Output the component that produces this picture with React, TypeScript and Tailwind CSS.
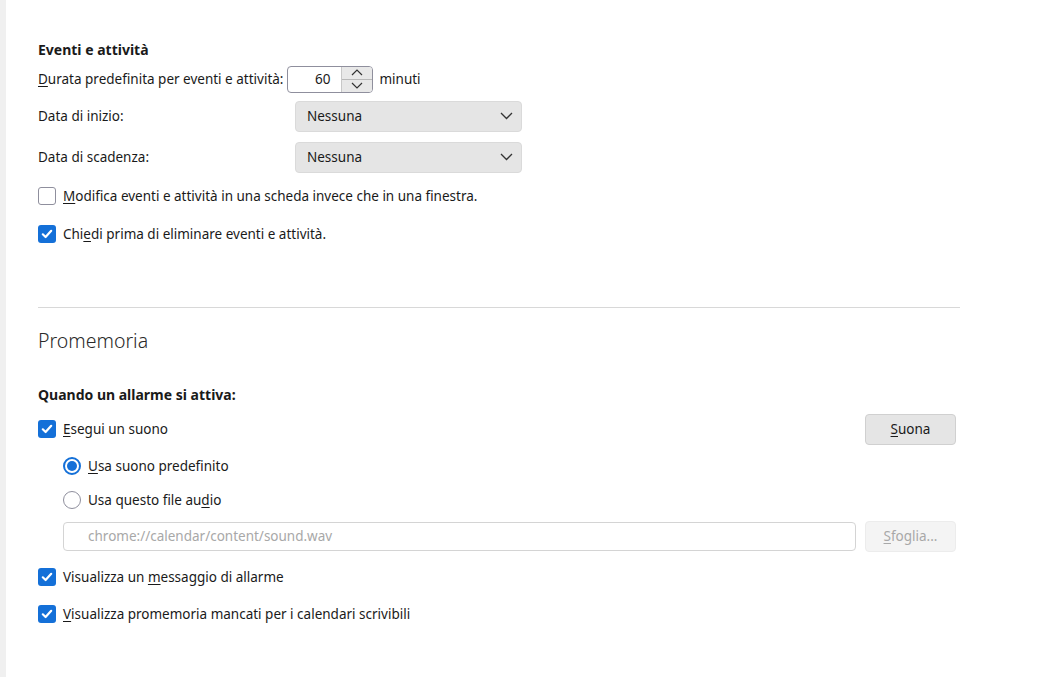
import React from "react";

const font = { fontFamily: '"Noto Sans", "Open Sans", sans-serif' };

function U({ children }: { children: React.ReactNode }) {
  return <span className="underline underline-offset-[2px] decoration-[1px]">{children}</span>;
}

function Check({ checked }: { checked: boolean }) {
  if (checked) {
    return (
      <span className="w-[18px] h-[18px] rounded-[3px] bg-[#1470d8] flex items-center justify-center shrink-0">
        <svg width="12" height="12" viewBox="0 0 12 12">
          <path d="M1.8 6.3 L4.6 9 L10.2 2.8" fill="none" stroke="white" strokeWidth="2.2" strokeLinecap="round" strokeLinejoin="round" />
        </svg>
      </span>
    );
  }
  return <span className="w-[18px] h-[18px] rounded-[3px] border border-[#8f8f9d] bg-white shrink-0" />;
}

function Radio({ checked }: { checked: boolean }) {
  if (checked) {
    return (
      <span className="w-[18px] h-[18px] rounded-full border-[2px] border-[#1470d8] bg-white flex items-center justify-center shrink-0">
        <span className="w-[10px] h-[10px] rounded-full bg-[#1470d8]" />
      </span>
    );
  }
  return <span className="w-[18px] h-[18px] rounded-full border border-[#8f8f9d] bg-white shrink-0" />;
}

function Chevron() {
  return (
    <svg width="13" height="8" viewBox="0 0 13 8">
      <path d="M1 1 L6.5 6.5 L12 1" fill="none" stroke="#333" strokeWidth="1.3" />
    </svg>
  );
}

function Select() {
  return (
    <div className="w-[227px] h-[31px] rounded-[4px] bg-[#e5e5e5] border border-[#dadada] flex items-center justify-between pl-[11px] pr-[8px]">
      <span>Nessuna</span>
      <Chevron />
    </div>
  );
}

export default function App() {
  return (
    <div className="w-[1037px] h-[677px] bg-white flex text-[13.5px] text-[#1a1a1a] overflow-hidden" style={font}>
      <div className="w-[6px] h-full bg-[#f0f0f0] shrink-0" />
      <div className="flex-1 pl-[32px] pr-[77px] flex flex-col">
        <div className="mt-[39px] h-[20px] flex items-center font-bold text-[14px]">Eventi e attività</div>

        <div className="mt-[7px] h-[26px] flex items-center">
          <span className="shrink-0 whitespace-nowrap mr-[4px]">
            <U>D</U>urata predefinita per eventi e attività:
          </span>
          <div className="w-[86px] h-[27px] rounded-[4px] border border-[#8f8f9d] flex overflow-hidden shrink-0">
            <div className="w-[53px] flex items-center justify-end pr-[11px]">60</div>
            <div className="w-[31px] flex flex-col border-l border-[#c8c8c8] bg-[#e8e8e8]">
              <div className="flex-1 flex items-center justify-center border-b border-[#b8b8b8]">
                <svg width="12" height="7" viewBox="0 0 12 7">
                  <path d="M1 6 L6 1 L11 6" fill="none" stroke="#333" strokeWidth="1.2" />
                </svg>
              </div>
              <div className="flex-1 flex items-center justify-center">
                <svg width="12" height="7" viewBox="0 0 12 7">
                  <path d="M1 1 L6 6 L11 1" fill="none" stroke="#333" strokeWidth="1.2" />
                </svg>
              </div>
            </div>
          </div>
          <span className="ml-[6px]">minuti</span>
        </div>

        <div className="mt-[9px] h-[30px] flex items-center">
          <span className="w-[257px] shrink-0">Data di inizio:</span>
          <Select />
        </div>
        <div className="mt-[11px] h-[30px] flex items-center">
          <span className="w-[257px] shrink-0">Data di scadenza:</span>
          <Select />
        </div>

        <div className="mt-[12px] h-[24px] flex items-center gap-[7px]">
          <Check checked={false} />
          <span>
            <U>M</U>odifica eventi e attività in una scheda invece che in una finestra.
          </span>
        </div>
        <div className="mt-[14px] h-[24px] flex items-center gap-[7px]">
          <Check checked={true} />
          <span>
            Chi<U>e</U>di prima di eliminare eventi e attività.
          </span>
        </div>

        <div className="mt-[61px] h-px bg-[#d8d8d8]" />

        <div className="mt-[19px] h-[28px] flex items-center text-[19.5px] font-light text-[#2a2a2a]">Promemoria</div>

        <div className="mt-[29px] h-[20px] flex items-center font-bold text-[14px]">Quando un allarme si attiva:</div>

        <div className="mt-[10px] h-[30px] flex items-center">
          <div className="flex items-center gap-[7px] flex-1">
            <Check checked={true} />
            <span>
              <U>E</U>segui un suono
            </span>
          </div>
          <div className="w-[91px] h-[31px] mr-[4px] rounded-[4px] bg-[#e5e5e5] border border-[#d0d0d0] flex items-center justify-center">
            <span>
              <U>S</U>uona
            </span>
          </div>
        </div>

        <div className="mt-[10px] h-[24px] flex items-center gap-[7px] pl-[25px]">
          <Radio checked={true} />
          <span>
            <U>U</U>sa suono predefinito
          </span>
        </div>
        <div className="mt-[10px] h-[24px] flex items-center gap-[7px] pl-[25px]">
          <Radio checked={false} />
          <span>
            Usa questo file au<U>d</U>io
          </span>
        </div>

        <div className="mt-[9px] h-[31px] flex items-center pl-[25px]">
          <div className="flex-1 h-[29px] rounded-[4px] border border-[#d4d4d4] flex items-center pl-[24px] text-[#a8a8a8]">
            chrome://calendar/content/sound.wav
          </div>
          <div className="w-[91px] h-[31px] ml-[9px] mr-[4px] rounded-[4px] bg-[#f4f4f4] border border-[#ececec] flex items-center justify-center text-[#a8a8a8]">
            <span>
              <U>S</U>foglia...
            </span>
          </div>
        </div>

        <div className="mt-[13px] h-[24px] flex items-center gap-[7px]">
          <Check checked={true} />
          <span>
            Visualizza un <U>m</U>essaggio di allarme
          </span>
        </div>
        <div className="mt-[13px] h-[24px] flex items-center gap-[7px]">
          <Check checked={true} />
          <span>
            <U>V</U>isualizza promemoria mancati per i calendari scrivibili
          </span>
        </div>
      </div>
    </div>
  );
}
